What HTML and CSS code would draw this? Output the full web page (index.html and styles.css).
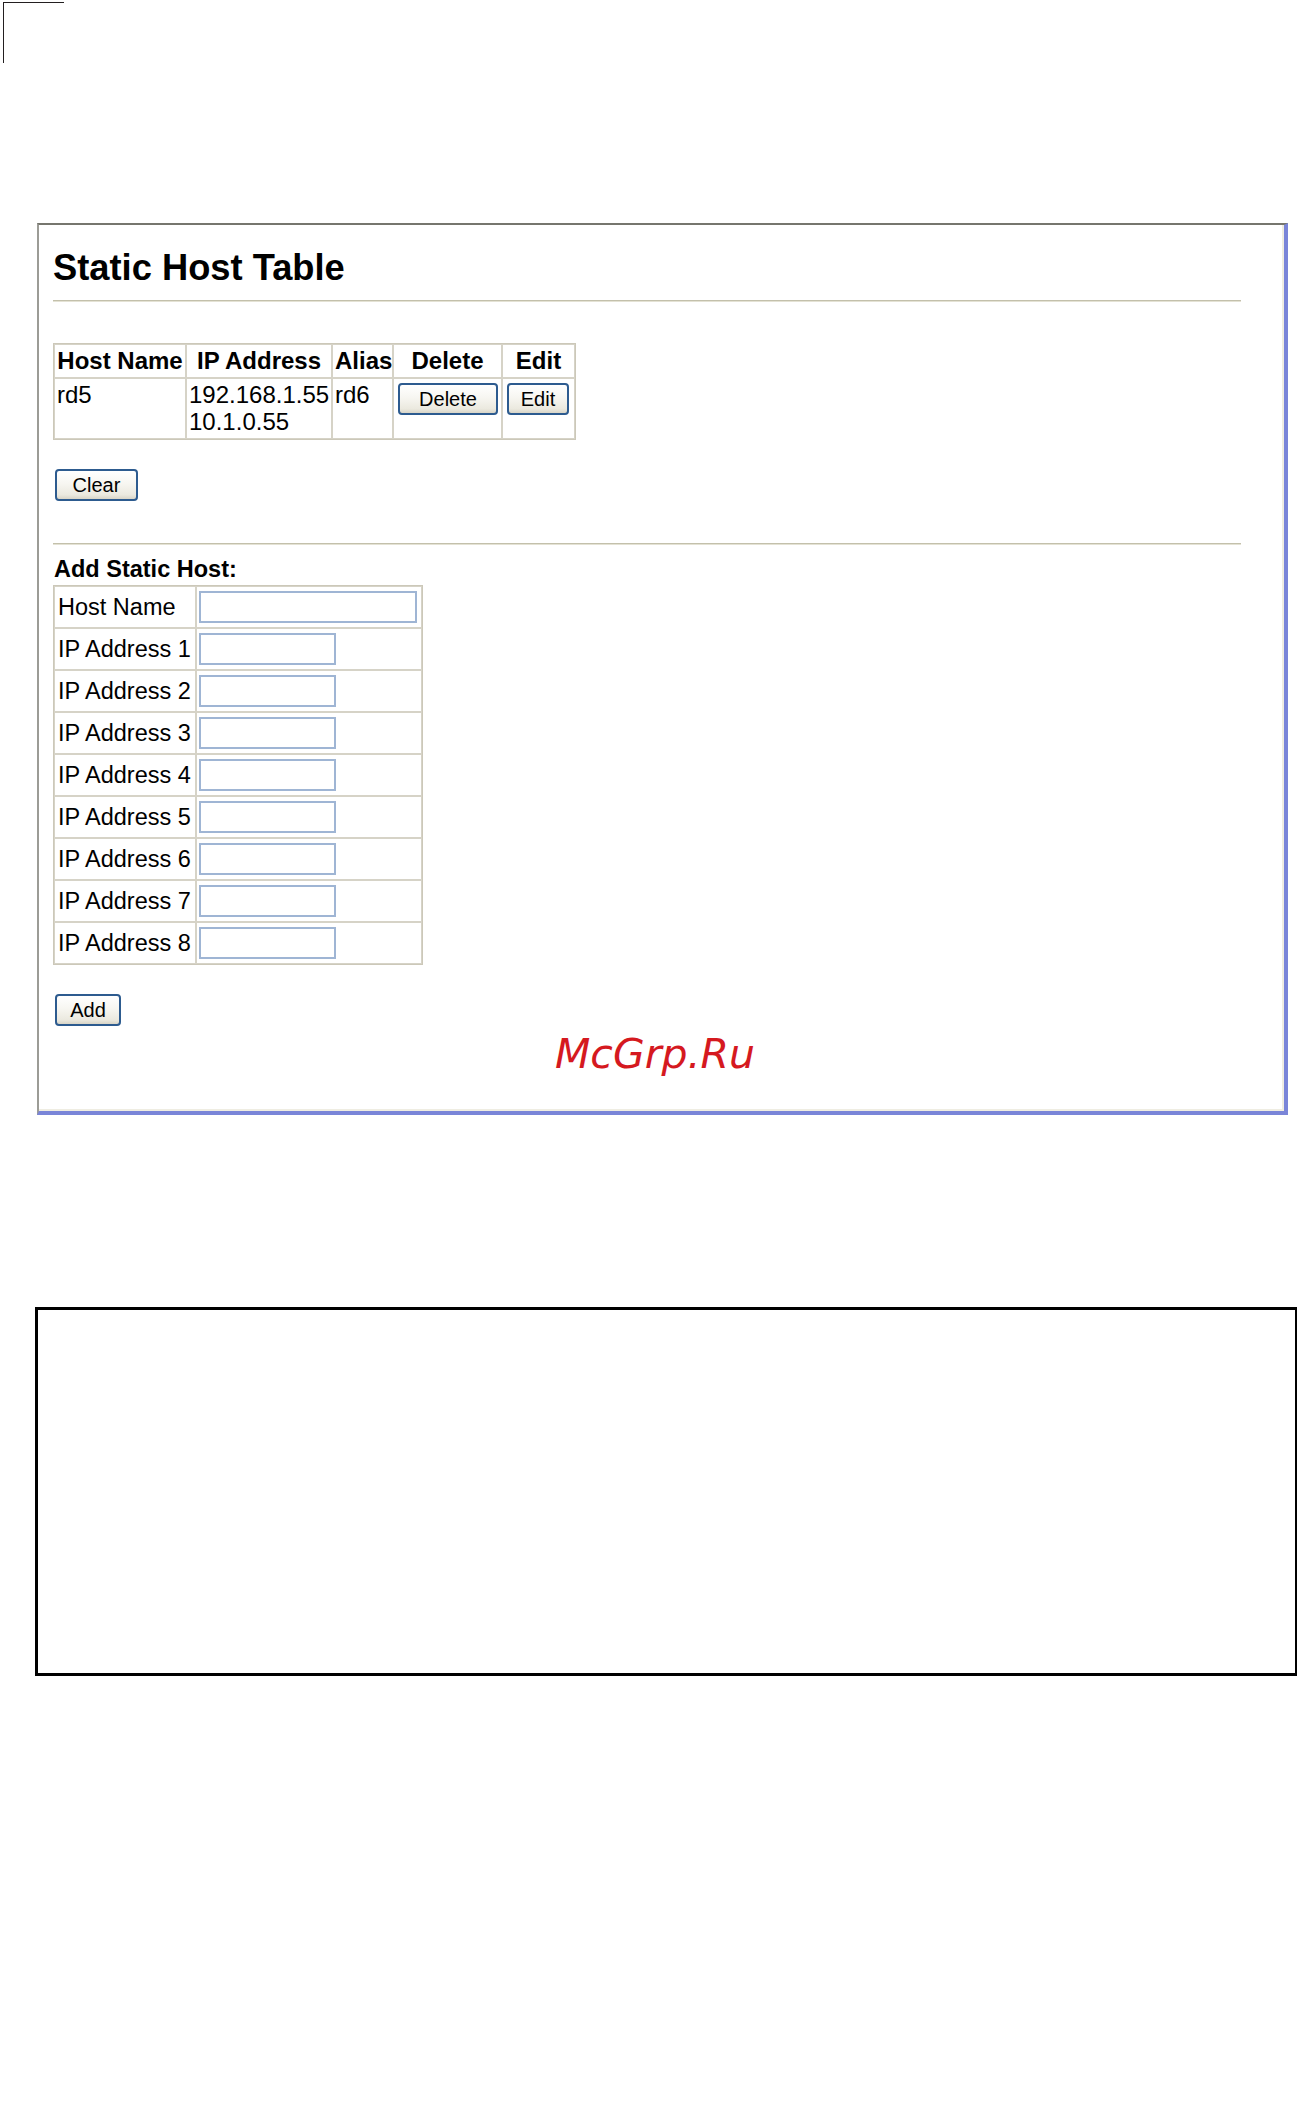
FILE: index.html
```html
<!DOCTYPE html>
<html>
<head>
<meta charset="utf-8">
<title>Static Host Table</title>
<link rel="stylesheet" href="styles.css">
</head>
<body>
<div class="page">
  <div class="crop-mark"></div>

  <div class="panel">
    <h1 class="title">Static Host Table</h1>
    <div class="rule"></div>

    <table class="host-table">
      <thead>
        <tr>
          <th class="c-name">Host Name</th>
          <th class="c-ip">IP Address</th>
          <th class="c-alias">Alias</th>
          <th class="c-del">Delete</th>
          <th class="c-edit">Edit</th>
        </tr>
      </thead>
      <tbody>
        <tr>
          <td>rd5</td>
          <td>192.168.1.55<br>10.1.0.55</td>
          <td>rd6</td>
          <td class="cell-btn"><button class="btn btn-delete" type="button">Delete</button></td>
          <td class="cell-btn"><button class="btn btn-edit" type="button">Edit</button></td>
        </tr>
      </tbody>
    </table>

    <button class="btn btn-clear" type="button">Clear</button>

    <div class="rule rule-second"></div>

    <div class="subtitle">Add Static Host:</div>
    <table class="add-table">
      <tr><td class="lbl">Host Name</td><td class="fld"><input class="inp inp-wide" type="text"></td></tr>
      <tr><td class="lbl">IP Address 1</td><td class="fld"><input class="inp" type="text"></td></tr>
      <tr><td class="lbl">IP Address 2</td><td class="fld"><input class="inp" type="text"></td></tr>
      <tr><td class="lbl">IP Address 3</td><td class="fld"><input class="inp" type="text"></td></tr>
      <tr><td class="lbl">IP Address 4</td><td class="fld"><input class="inp" type="text"></td></tr>
      <tr><td class="lbl">IP Address 5</td><td class="fld"><input class="inp" type="text"></td></tr>
      <tr><td class="lbl">IP Address 6</td><td class="fld"><input class="inp" type="text"></td></tr>
      <tr><td class="lbl">IP Address 7</td><td class="fld"><input class="inp" type="text"></td></tr>
      <tr><td class="lbl">IP Address 8</td><td class="fld"><input class="inp" type="text"></td></tr>
    </table>

    <button class="btn btn-add" type="button">Add</button>

    <div class="watermark">McGrp.Ru</div>
  </div>

  <div class="note-box"></div>
</div>
</body>
</html>
```

FILE: styles.css
```css
html, body {
  margin: 0;
  padding: 0;
  background: #ffffff;
}

body {
  font-family: "Liberation Sans", Arial, sans-serif;
  color: #000000;
}

.page {
  padding-top: 2px;
  padding-bottom: 40px;
}

.crop-mark {
  margin-left: 3px;
  width: 60px;
  height: 60px;
  border-top: 1.5px solid #231f20;
  border-left: 1.5px solid #231f20;
}

.panel {
  box-sizing: border-box;
  margin-top: 159.5px;
  margin-left: 37px;
  width: 1251px;
  border-top: 2px solid #76766e;
  border-left: 2px solid #9c9c96;
  border-right: 4px solid #7a85d8;
  border-bottom: 4px solid #7a85d8;
  box-shadow: inset -2px -2px 0 #efede2;
  padding: 23px 43px 34px 14px;
}

.title {
  margin: 0;
  font-size: 36.3px;
  line-height: 40px;
  font-weight: bold;
}

.rule {
  margin-top: 12px;
  height: 0;
  border-top: 1px solid #c3c0ab;
  border-bottom: 1px solid #e4e2d4;
}

.rule-second {
  margin-top: 42px;
}

/* Static host table */
.host-table {
  margin-top: 41px;
  border-collapse: separate;
  border-spacing: 0;
  border: 1px solid #ccc8b9;
  table-layout: fixed;
  width: 523px;
  font-size: 24px;
}

.host-table th,
.host-table td {
  box-sizing: border-box;
  border: 1px solid #d6d3c7;
  padding: 0 2px;
}

.host-table th {
  height: 34px;
  line-height: 32px;
  text-align: center;
  font-weight: bold;
  white-space: nowrap;
}

.host-table td {
  height: 61px;
  line-height: 27px;
  padding-top: 2px;
  padding-bottom: 1px;
  vertical-align: top;
  text-align: left;
}

.host-table .cell-btn {
  padding: 4px 3px 0 4px;
}

.c-name { width: 132px; }
.c-ip { width: 146px; }
.c-alias { width: 61px; }
.c-del { width: 109px; }
.c-edit { width: 73px; }

/* Buttons */
.btn {
  display: inline-block;
  box-sizing: border-box;
  height: 32px;
  padding: 0;
  margin: 0;
  vertical-align: top;
  font-family: "Liberation Sans", Arial, sans-serif;
  font-size: 20px;
  line-height: 28px;
  color: #000000;
  text-align: center;
  border: 2px solid #2d5b8f;
  border-radius: 4px;
  background: linear-gradient(180deg, #ffffff 0%, #f7f6f1 45%, #ebe9df 85%, #d9d5c7 100%);
}

.btn-delete { width: 100px; }
.btn-edit { width: 62px; }

.btn-clear {
  display: block;
  width: 83px;
  margin-top: 29px;
  margin-left: 2px;
}

.btn-add {
  display: block;
  width: 66px;
  margin-top: 29px;
  margin-left: 2px;
}

/* Add static host */
.subtitle {
  margin-top: 11px;
  font-size: 23.5px;
  line-height: 27px;
  font-weight: bold;
  padding-left: 1px;
}

.add-table {
  margin-top: 2px;
  border-collapse: separate;
  border-spacing: 0;
  border: 1px solid #ccc8b9;
  table-layout: fixed;
  width: 370px;
  font-size: 23.5px;
}

.add-table td {
  box-sizing: border-box;
  border: 1px solid #d6d3c7;
  height: 42px;
  padding: 4px 2px;
  vertical-align: middle;
}

.add-table .lbl {
  width: 142px;
  line-height: 32px;
  white-space: nowrap;
  padding-left: 3px;
  padding-right: 0;
}

.add-table .fld {
  width: 226px;
}

.inp {
  display: block;
  box-sizing: border-box;
  width: 137px;
  height: 32px;
  margin: 0;
  padding: 0 3px;
  border: 2px solid #9fb5d4;
  background: #ffffff;
  font-family: "Liberation Sans", Arial, sans-serif;
  font-size: 20px;
}

.inp-wide {
  width: 218px;
}

.watermark {
  margin-top: 5px;
  margin-left: 502px;
  font-family: "DejaVu Sans", "Liberation Sans", sans-serif;
  font-style: italic;
  font-size: 41px;
  line-height: 46px;
  color: #d5191f;
}

.note-box {
  box-sizing: border-box;
  margin-top: 192px;
  margin-left: 35px;
  width: 1263px;
  height: 369px;
  border: 3px solid #000000;
}
```
